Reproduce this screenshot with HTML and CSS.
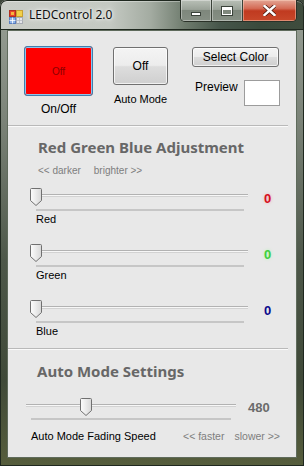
FILE: index.html
```html
<!DOCTYPE html>
<html>
<head>
<meta charset="utf-8">
<link rel="stylesheet" href="styles.css">
</head>
<body>
<div class="window">
  <div class="titlebar">
    <svg class="appicon" width="14" height="14" viewBox="0 0 14 14">
      <rect x="0.5" y="0.5" width="6" height="6" fill="#e8452c" stroke="#b03020"/>
      <rect x="2" y="2" width="3" height="3" fill="#f6b43c"/>
      <rect x="7.5" y="0.5" width="6" height="6" fill="#f2d04a" stroke="#c8a030"/>
      <rect x="0.5" y="7.5" width="6" height="6" fill="#8fb4e8" stroke="#5a7fc0"/>
      <path d="M3.5 7.5V13.5M0.5 10.5H6.5" stroke="#ffffff" stroke-width="0.8"/>
      <rect x="7.5" y="7.5" width="6" height="6" fill="#e4e6ea" stroke="#a8acb4"/>
      <path d="M10.5 7.5V13.5M7.5 10.5H13.5" stroke="#b8bcc4" stroke-width="0.8"/>
    </svg>
    <span class="title">LEDControl 2.0</span>
    <div class="caption">
      <div class="cbtn min"><span class="dash"></span></div>
      <div class="cbtn max"><span class="box"></span></div>
      <div class="cbtn close">
        <svg width="13" height="11" viewBox="0 0 13 11">
          <path d="M1.5 1 L11.5 10 M11.5 1 L1.5 10" stroke="#4a1a10" stroke-width="4" stroke-linecap="square"/>
          <path d="M1.5 1 L11.5 10 M11.5 1 L1.5 10" stroke="#ffffff" stroke-width="2.4" stroke-linecap="square"/>
        </svg>
      </div>
    </div>
  </div>
  <div class="client">
    <section class="top">
      <div class="col col1">
        <div class="btn redbtn">Off</div>
        <div class="lbl lbl-onoff">On/Off</div>
      </div>
      <div class="col col2">
        <div class="btn graybtn autobtn">Off</div>
        <div class="lbl lbl-auto">Auto Mode</div>
      </div>
      <div class="col col3">
        <div class="btn graybtn selbtn">Select Color</div>
        <div class="preview-row">
          <span class="lbl-prev">Preview</span>
          <div class="preview"></div>
        </div>
      </div>
    </section>
    <div class="sep"></div>
    <section class="rgb">
      <h2 class="head">Red Green Blue Adjustment</h2>
      <div class="hint"><span>&lt;&lt; darker</span><span>brighter &gt;&gt;</span></div>
      <div class="srow">
        <div class="sbox">
          <div class="slider">
            <div class="track"></div>
            <div class="ticks"></div>
            <svg class="thumb" width="12" height="18" viewBox="0 0 12 18"><defs><linearGradient id="tg1" x1="0" y1="0" x2="1" y2="0"><stop offset="0" stop-color="#fdfdfd"/><stop offset="1" stop-color="#d8d8d8"/></linearGradient></defs><path d="M1.5 0.5H10.5Q11.5 0.5 11.5 1.5V12.5L6 17.5L0.5 12.5V1.5Q0.5 0.5 1.5 0.5Z" fill="url(#tg1)" stroke="#707070"/></svg>
          </div>
          <div class="slabel">Red</div>
        </div>
        <div class="val v-red">0</div>
      </div>
      <div class="srow">
        <div class="sbox">
          <div class="slider">
            <div class="track"></div>
            <div class="ticks"></div>
            <svg class="thumb" width="12" height="18" viewBox="0 0 12 18"><path d="M1.5 0.5H10.5Q11.5 0.5 11.5 1.5V12.5L6 17.5L0.5 12.5V1.5Q0.5 0.5 1.5 0.5Z" fill="url(#tg1)" stroke="#707070"/></svg>
          </div>
          <div class="slabel">Green</div>
        </div>
        <div class="val v-green">0</div>
      </div>
      <div class="srow">
        <div class="sbox">
          <div class="slider">
            <div class="track"></div>
            <div class="ticks"></div>
            <svg class="thumb" width="12" height="18" viewBox="0 0 12 18"><path d="M1.5 0.5H10.5Q11.5 0.5 11.5 1.5V12.5L6 17.5L0.5 12.5V1.5Q0.5 0.5 1.5 0.5Z" fill="url(#tg1)" stroke="#707070"/></svg>
          </div>
          <div class="slabel">Blue</div>
        </div>
        <div class="val v-blue">0</div>
      </div>
    </section>
    <div class="sep"></div>
    <section class="auto">
      <h2 class="head head-auto">Auto Mode Settings</h2>
      <div class="arow">
        <div class="slider aslider">
          <div class="track atrack"></div>
          <div class="ticks aticks"></div>
          <svg class="thumb athumb" width="12" height="18" viewBox="0 0 12 18"><path d="M1.5 0.5H10.5Q11.5 0.5 11.5 1.5V12.5L6 17.5L0.5 12.5V1.5Q0.5 0.5 1.5 0.5Z" fill="url(#tg1)" stroke="#707070"/></svg>
        </div>
        <div class="val v-gray">480</div>
      </div>
      <div class="brow">
        <span class="lbl-speed">Auto Mode Fading Speed</span>
        <span class="hint2"><span>&lt;&lt; faster</span><span>slower &gt;&gt;</span></span>
      </div>
    </section>
  </div>
</div>
</body>
</html>
```
FILE: styles.css
```css
* { box-sizing: border-box; }
html, body { margin: 0; padding: 0; }
body {
  width: 304px;
  height: 466px;
  overflow: hidden;
  background: #3c463a;
  font-family: "Liberation Sans", Arial, sans-serif;
}
.window {
  width: 304px;
  height: 466px;
  display: flex;
  flex-direction: column;
  padding: 0 7px 8px 7px;
  border-radius: 7px 7px 0 0;
  background: linear-gradient(180deg, #9aa197 0, #7b8378 120px, #4d5749 260px, #3f4938 380px, #565d3c 100%);
  box-shadow: inset 0 0 0 1px #1f281f;
}
.titlebar {
  height: 30px;
  margin: 0 -7px;
  display: flex;
  align-items: flex-start;
  border-radius: 7px 7px 0 0;
  background: linear-gradient(90deg, #c9cdc7 0, #c4c9c2 110px, #a4aca2 150px, #6e7b6d 185px, #46554a 220px, #3a4a3c 260px, #3f4c3d 100%);
  box-shadow: inset 0 0 0 1px #1f281f, inset 0 2px 0 rgba(255,255,255,0.35);
}
.appicon {
  margin: 10px 0 0 9px;
  flex: none;
}
.title {
  margin: 7px 0 0 6px;
  font-family: "Noto Sans", "Open Sans", sans-serif;
  font-size: 12px;
  line-height: 16px;
  color: #111;
  text-shadow: 0 0 6px #fff, 0 0 3px #fff;
}
.caption {
  margin-left: auto;
  margin-right: 7px;
  display: flex;
  height: 22px;
  border: 1px solid #2a3128;
  border-top: none;
  border-radius: 0 0 5px 5px;
  overflow: hidden;
}
.cbtn {
  height: 21px;
  display: flex;
  align-items: center;
  justify-content: center;
}
.min, .max {
  width: 31px;
  background: linear-gradient(180deg, #b9c0b7 0, #9aa298 45%, #7e877c 50%, #868f84 100%);
  border-right: 1px solid #3a4238;
  box-shadow: inset 0 0 0 1px rgba(255,255,255,0.35);
}
.close {
  width: 53px;
  background: linear-gradient(180deg, #e3a594 0, #d46b55 40%, #c03a20 52%, #c8482a 100%);
  box-shadow: inset 0 0 0 1px rgba(255,220,200,0.45);
}
.dash {
  display: block;
  width: 10px;
  height: 4px;
  margin-top: 7px;
  background: #fff;
  border: 1px solid #3a423a;
}
.box {
  display: block;
  width: 12px;
  height: 10px;
  background: transparent;
  border: 1px solid #3a423a;
  box-shadow: inset 0 0 0 1px #fff, inset 0 3px 0 #fff;
}
.client {
  flex: 1;
  background: #e8e8e8;
  border: 1px solid #5f6b5c;
  display: flex;
  flex-direction: column;
}
.top {
  height: 94px;
  display: flex;
  align-items: flex-start;
  padding: 15px 0 0 16px;
}
.col { display: flex; flex-direction: column; align-items: center; }
.col1 { width: 69px; margin-right: 20px; }
.col2 { width: 55px; margin-right: 24px; margin-top: 1px; }
.col3 { width: 88px; margin-top: 1px; align-items: stretch; }
.btn {
  display: flex;
  align-items: center;
  justify-content: center;
  font-size: 11px;
  color: #000;
  border-radius: 3px;
}
.redbtn {
  width: 69px;
  height: 50px;
  background: #fe0000;
  border: 1px solid #3f7fae;
  box-shadow: inset 0 0 0 1px #8fc4ea;
  color: #8a0000;
  font-size: 10px;
}
.graybtn {
  border: 1px solid #707070;
  background: linear-gradient(180deg, #f4f4f4 0, #ececec 48%, #dddddd 52%, #cfcfcf 100%);
  box-shadow: inset 0 0 0 1px rgba(255,255,255,0.7);
}
.autobtn { width: 55px; height: 38px; font-size: 12px; }
.selbtn { width: 87px; height: 20px; font-size: 12px; }
.lbl { color: #000; white-space: nowrap; }
.lbl-onoff { margin-top: 6px; font-size: 12px; line-height: 14px; }
.lbl-auto { margin-top: 8px; font-size: 11px; line-height: 13px; }
.preview-row {
  margin-top: 13px;
  display: flex;
  align-items: flex-start;
  padding-left: 3px;
}
.lbl-prev { font-size: 12px; line-height: 14px; color: #000; }
.preview {
  margin-left: auto;
  width: 36px;
  height: 26px;
  background: #fff;
  border: 1px solid #9c9c9c;
}
.sep {
  height: 2px;
  margin-right: 8px;
  border-top: 1px solid #b9b9b9;
  border-bottom: 1px solid #fafafa;
  flex: none;
}
.rgb {
  height: 221px;
  padding: 10px 0 0 0;
  flex: none;
}
.head {
  margin: 0 0 0 30px;
  font-family: "Noto Sans", "Open Sans", sans-serif;
  font-weight: 700;
  font-size: 15px;
  line-height: 20px;
  color: #676767;
}
.hint {
  margin: 8px 0 0 30px;
  display: flex;
  gap: 13px;
  font-size: 10px;
  line-height: 12px;
  color: #7e7e7e;
}
.srow {
  height: 56px;
  display: flex;
  align-items: flex-start;
  padding-left: 22px;
}
.hint + .srow { margin-top: 11px; }
.sbox { width: 226px; }
.slider {
  position: relative;
  height: 24px;
  width: 220px;
}
.track {
  position: absolute;
  left: 3px;
  top: 6px;
  width: 215px;
  height: 3px;
  border-top: 1px solid #b2b2b2;
  background: #f7f7f7;
  border-bottom: 1px solid #d2d2d2;
}
.ticks {
  position: absolute;
  left: 6px;
  top: 21px;
  width: 208px;
  height: 2px;
  background: #c6c6c6;
}
.thumb {
  position: absolute;
  left: 0;
  top: 0;
}
.slabel {
  margin: 1px 0 0 6px;
  font-size: 11px;
  line-height: 12px;
  color: #000;
}
.val {
  margin-left: 8px;
  margin-top: 3px;
  font-weight: 700;
  font-size: 13px;
  line-height: 16px;
}
.v-red { color: #d4101c; text-shadow: 0 0 3px rgba(255,120,140,0.6); }
.v-green { color: #3fcf3f; text-shadow: 0 0 3px rgba(140,255,140,0.6); }
.v-blue { color: #0a0a8c; }
.v-gray { color: #6b6b6b; margin-left: 10px; margin-top: 2px; }
.auto {
  flex: 1;
  padding-top: 11px;
}
.head-auto { margin-left: 29px; }
.arow {
  margin-top: 17px;
  display: flex;
  align-items: flex-start;
  padding-left: 18px;
}
.aslider { width: 212px; }
.atrack { left: 0; width: 210px; }
.aticks { left: 5px; width: 200px; top: 20px; }
.athumb { left: 54px; }
.brow {
  margin-top: 8px;
  display: flex;
  align-items: center;
  padding: 0 16px 0 23px;
  font-size: 11px;
  line-height: 13px;
}
.lbl-speed { color: #000; }
.hint2 {
  margin-left: auto;
  display: flex;
  gap: 10px;
  font-size: 10.5px;
  color: #7e7e7e;
}
```
